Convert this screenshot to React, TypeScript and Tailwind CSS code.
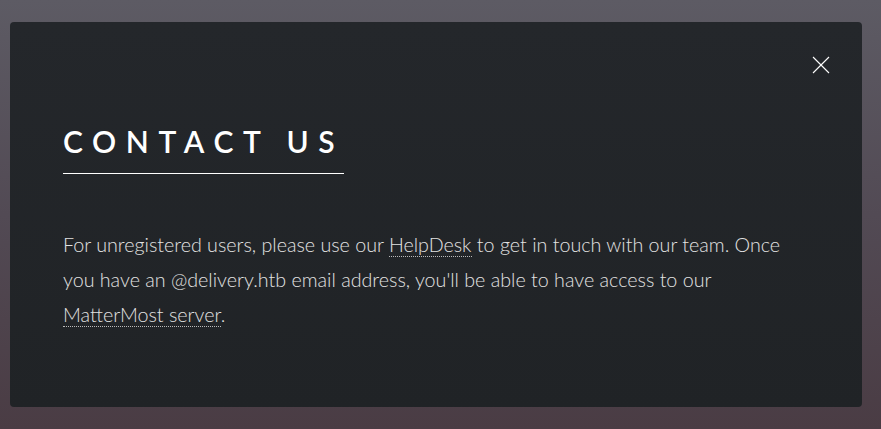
import { useState } from "react";

// Panneau "contact" façon template Dimension
export default function App() {
  const [open, setOpen] = useState(true);

  return (
    <div
      className="min-h-screen h-[429px] w-full bg-gradient-to-b from-[#5d5b64] via-[#524a54] to-[#4a3c44] pl-[10px] pr-[19px] pt-[22px]"
      style={{ fontFamily: '"Lato", "Noto Sans", sans-serif' }}
    >
      {open && (
        <article className="relative h-[385px] rounded-[4px] bg-gradient-to-b from-[#24272b] to-[#202326] px-[53px] pt-[96px]">
          <button
            type="button"
            onClick={() => setOpen(false)}
            className="absolute right-[20px] top-[22px] flex h-[42px] w-[42px] items-center justify-center"
            aria-label="Close"
          >
            <svg width="18" height="18" viewBox="0 0 18 18" fill="none" stroke="#ffffff" strokeWidth="1.1">
              <line x1="1" y1="1" x2="17" y2="17" />
              <line x1="17" y1="1" x2="1" y2="17" />
            </svg>
          </button>

          <h2 className="w-max border-b border-white pb-[8px] text-[30px] font-semibold leading-[47px] tracking-[9.6px] text-white">
            CONTACT US
          </h2>

          <p className="mt-[53px] text-[19.7px] font-light leading-[35px] text-[#e2e2e2]">
            For unregistered users, please use our{" "}
            <a href="#" className="border-b border-dotted border-[#bbbbbb]">HelpDesk</a> to get in touch with our
            team. Once you have an @delivery.htb email address, you'll be able to have access to our{" "}
            <a href="#" className="border-b border-dotted border-[#bbbbbb]">MatterMost server</a>.
          </p>
        </article>
      )}
    </div>
  );
}
